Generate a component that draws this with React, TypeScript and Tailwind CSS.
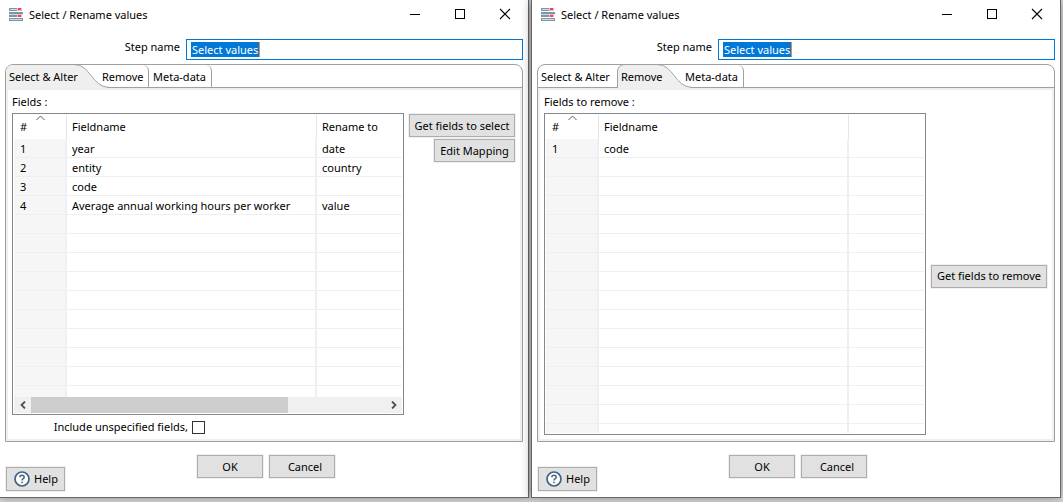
import React from "react";

const FONT = "font-['Noto_Sans','Open_Sans',sans-serif]";

type Row = string[];

function StepIcon() {
  return (
    <svg width="14" height="13" viewBox="0 0 14 13" shapeRendering="crispEdges" aria-hidden="true">
      <g fill="#7d95a5">
        <path d="M0 0h8v1H1v1h7v1H0z" />
        <path d="M0 4h14v2H0z" />
        <path d="M0 7h8v2H0z" />
        <path d="M0 10h14v3H0z" />
      </g>
      <g fill="#cfdbe1">
        <rect x="1" y="1" width="7" height="1" />
        <rect x="1" y="11" width="12" height="1" />
        <rect x="0" y="6" width="14" height="1" />
      </g>
      <g fill="#f6b9c0">
        <rect x="8" y="0" width="5" height="3" />
        <rect x="8" y="6" width="5" height="3" />
      </g>
      <g fill="#e5485d">
        <rect x="9" y="0" width="3" height="2" />
        <rect x="9" y="7" width="3" height="2" />
      </g>
    </svg>
  );
}

function TitleBar() {
  return (
    <header className="flex h-7 items-center pl-[9px] pr-[17px]">
      <StepIcon />
      <h1 className="ml-1.5 flex-1 whitespace-nowrap pt-0.5">Select / Rename values</h1>
      <div className="flex gap-[33px]">
        <button type="button" aria-label="Minimize">
          <svg width="12" height="12" viewBox="0 0 12 12" shapeRendering="crispEdges">
            <path d="M1 6.5h10" stroke="#000" />
          </svg>
        </button>
        <button type="button" aria-label="Maximize">
          <svg width="12" height="12" viewBox="0 0 12 12" shapeRendering="crispEdges">
            <path d="M1.5 1.5h9v9h-9z" stroke="#000" fill="none" />
          </svg>
        </button>
        <button type="button" aria-label="Close">
          <svg width="12" height="12" viewBox="0 0 12 12">
            <path d="M1 1l10 10M11 1L1 11" stroke="#000" strokeWidth="1.1" />
          </svg>
        </button>
      </div>
    </header>
  );
}

function PushButton({ children, className = "" }: { children: React.ReactNode; className?: string }) {
  return (
    <button
      type="button"
      className={`flex h-[23px] items-center justify-center whitespace-nowrap border border-[#adadad] bg-[#e1e1e1] outline outline-1 outline-[#f0f0f0] ${className}`}
    >
      {children}
    </button>
  );
}

function SelectAlterTabs() {
  return (
    <div role="tablist" className="flex h-[22px]">
      <button type="button" role="tab" aria-selected="true" className="relative w-[93px] pl-[3px] pt-0.5 text-left">
        <svg className="absolute left-0 top-0" width="103" height="23" viewBox="0 0 103 23" aria-hidden="true">
          <path d="M0 23V7Q1 0 7 0H68C84 0 84 21 103 22.500V23Z" fill="#efefef" />
          <path d="M68 -0.5C85 -0.500 85 21.500 103 22.500" fill="none" stroke="#a0a0a0" />
        </svg>
        <span className="relative">Select &amp; Alter</span>
      </button>
      <button type="button" role="tab" aria-selected="false" className="w-[50px] rounded-tr-md border-r border-[#a0a0a0] pl-[3px] pt-0.5 text-left">
        Remove
      </button>
      <button type="button" role="tab" aria-selected="false" className="w-[63px] rounded-tr-md border-r border-[#a0a0a0] pl-1 pt-0.5 text-left">
        Meta-data
      </button>
    </div>
  );
}

function RemoveTabs() {
  return (
    <div role="tablist" className="flex h-[22px]">
      <button type="button" role="tab" aria-selected="false" className="w-[79px] pl-[3px] pt-0.5 text-left">
        Select &amp; Alter
      </button>
      <button type="button" role="tab" aria-selected="true" className="relative w-16 pl-1 pt-0.5 text-left">
        <svg className="absolute left-0 top-0" width="75" height="23" viewBox="0 0 75 23" aria-hidden="true">
          <path d="M0 23V6Q1 0 7 0H40C56 0 56 21 75 22.500V23Z" fill="#efefef" />
          <path d="M0.500 23V6Q1.500 0 7 -0.500M40 -0.500C57 -0.500 57 21.500 75 22.500" fill="none" stroke="#a0a0a0" />
        </svg>
        <span className="relative">Remove</span>
      </button>
      <button type="button" role="tab" aria-selected="false" className="w-[63px] rounded-tr-md border-r border-[#a0a0a0] pl-1 pt-0.5 text-left">
        Meta-data
      </button>
    </div>
  );
}

function FieldTable({ third, rows, blank, lastRow, scroll }: { third: string; rows: Row[]; blank: number; lastRow: string; scroll?: boolean }) {
  const all: Row[] = [...rows, ...Array.from({ length: blank }, () => ["", "", ""])];
  return (
    <div className="min-w-0 flex-1 border border-[#828790] p-px">
      <table className="w-full table-fixed border-separate border-spacing-0 text-left">
        <colgroup>
          <col className="w-[53px]" />
          <col className="w-[250px]" />
          <col />
        </colgroup>
        <thead>
          <tr className="h-6">
            <th className="relative border-r border-[#e5e5e5] p-0 pl-1.5 font-normal">
              #
              <svg className="absolute left-[22px] top-0" width="9" height="6" viewBox="0 0 9 6" aria-hidden="true">
                <path d="M0.500 5L4.500 1L8.500 5" fill="none" stroke="#5a5a5a" />
              </svg>
            </th>
            <th className="border-r border-[#e5e5e5] p-0 pl-[5px] font-normal">Fieldname</th>
            <th className="p-0 pl-[5px] font-normal">{third}</th>
          </tr>
        </thead>
        <tbody>
          {all.map((r, i) => (
            <tr key={i} className="h-[19px]">
              <td className="border-b border-r-2 border-b-[#efefef] border-r-[#eceff5] bg-[#f6f6f6] p-0 pl-1.5 pt-0.5 leading-4">{r[0]}</td>
              <td className="whitespace-nowrap border-b border-r-2 border-b-[#efefef] border-r-[#eceff5] p-0 pl-[5px] pt-0.5 leading-4">{r[1]}</td>
              <td className="border-b border-b-[#efefef] p-0 pl-[5px] pt-0.5 leading-4">{r[2]}</td>
            </tr>
          ))}
          <tr className={lastRow}>
            <td className="border-r-2 border-[#eceff5] bg-[#f6f6f6] p-0" />
            <td className="border-r-2 border-[#eceff5] p-0" />
            <td className="p-0" />
          </tr>
        </tbody>
      </table>
      {scroll && (
        <div className="flex h-4 bg-[#f0f0f0]">
          <button type="button" aria-label="Scroll left" className="flex w-[17px] items-center justify-center">
            <svg width="6" height="8" viewBox="0 0 6 8">
              <path d="M5 0.500L1.500 4L5 7.500" fill="none" stroke="#505050" strokeWidth="1.800" />
            </svg>
          </button>
          <div className="flex flex-1">
            <div className="w-8/11 bg-[#cdcdcd]" />
          </div>
          <button type="button" aria-label="Scroll right" className="flex w-[17px] items-center justify-center">
            <svg width="6" height="8" viewBox="0 0 6 8">
              <path d="M1 0.500L4.500 4L1 7.500" fill="none" stroke="#505050" strokeWidth="1.800" />
            </svg>
          </button>
        </div>
      )}
    </div>
  );
}

function StepWindow({ id, tabs, children, className }: { id: string; tabs: React.ReactNode; children: React.ReactNode; className: string }) {
  return (
    <section className={`flex min-w-0 flex-col border-b border-[#666] bg-white ${className}`}>
      <TitleBar />
      <div className="mt-[11px] flex h-[21px] pr-[5px]">
        <label htmlFor={id} className="w-[186px] pr-1.5 text-right leading-4">
          Step name
        </label>
        <div className="flex min-w-0 flex-1 items-center border border-[#0078d7] bg-white pl-1">
          <input
            id={id}
            defaultValue="Select values"
            className="h-[15px] w-[69px] border-r border-[#f08a3c] bg-[#0078d7] pl-px leading-[15px] text-white outline-none"
          />
        </div>
      </div>
      <div className="mx-[5px] mt-1 flex flex-1 flex-col rounded-t-lg border border-[#a0a0a0]">
        {tabs}
        <div className="flex flex-1 flex-col border-2 border-t-0 border-[#efefef]">
          <div className="-mx-0.5 h-[3px] border-t border-[#a0a0a0] bg-[#efefef]" />
          <div className="flex-1 px-1">{children}</div>
        </div>
      </div>
      <footer className="grid grid-cols-[1fr_auto_1fr] pb-1.5 pl-1 pt-[13px]">
        <button
          type="button"
          className="ml-0.5 mt-3 flex h-6 w-[59px] items-center gap-1 border border-[#adadad] bg-[#e1e1e1] pl-[7px] outline outline-1 outline-[#f0f0f0]"
        >
          <svg width="16" height="16" viewBox="0 0 16 16" aria-hidden="true">
            <circle cx="8" cy="8" r="7" fill="#fff" stroke="#3f6384" strokeWidth="1.700" />
            <path d="M5.800 6.300Q5.900 4.300 8 4.300T10.200 6.200Q10.200 7.300 9 7.900Q8 8.400 8 9.600M8 10.800V12.200" fill="none" stroke="#3f6384" strokeWidth="1.500" />
          </svg>
          Help
        </button>
        <div className="flex gap-1.5">
          <PushButton className="w-[66px]">OK</PushButton>
          <PushButton className="w-[66px] pl-1.5">Cancel</PushButton>
        </div>
      </footer>
    </section>
  );
}

export default function App() {
  return (
    <main className={`grid grid-cols-[529fr_530fr] gap-0.5 overflow-hidden bg-[#d6d6d6] pb-1 pr-0.5 text-[11px] leading-4 text-black ${FONT}`}>
      <StepWindow id="step-select" tabs={<SelectAlterTabs />} className="border-r shadow-[0_0_8px_rgba(0,0,0,0.35)]">
        <p className="mt-1 h-[19px] leading-4">Fields :</p>
        <div className="flex gap-[5px]">
          <FieldTable
            third="Rename to"
            rows={[
              ["1", "year", "date"],
              ["2", "entity", "country"],
              ["3", "code", ""],
              ["4", "Average annual working hours per worker", "value"],
            ]}
            blank={9}
            lastRow="h-[11px]"
            scroll
          />
          <div className="mr-px mt-px flex w-[106px] flex-col items-end gap-0.5">
            <PushButton className="w-[106px]">Get fields to select</PushButton>
            <PushButton className="w-[81px]">Edit Mapping</PushButton>
          </div>
        </div>
        <div className="flex h-6 items-center gap-1 pl-[39px]">
          <label htmlFor="include-unspecified" className="w-[137px] whitespace-nowrap text-right">Include unspecified fields,</label>
          <input id="include-unspecified" type="checkbox" className="h-[13px] w-[13px] appearance-none border border-[#333] bg-white" />
        </div>
      </StepWindow>
      <StepWindow id="step-remove" tabs={<RemoveTabs />} className="z-10 border-x shadow-[0_0_10px_rgba(0,0,0,0.35)]">
        <p className="mt-1 h-[19px] leading-4">Fields to remove :</p>
        <div className="flex items-center gap-[5px]">
          <FieldTable third="" rows={[["1", "code", ""]]} blank={14} lastRow="h-[9px]" />
          <PushButton className="mr-px mt-1 w-[116px]">Get fields to remove</PushButton>
        </div>
      </StepWindow>
    </main>
  );
}
